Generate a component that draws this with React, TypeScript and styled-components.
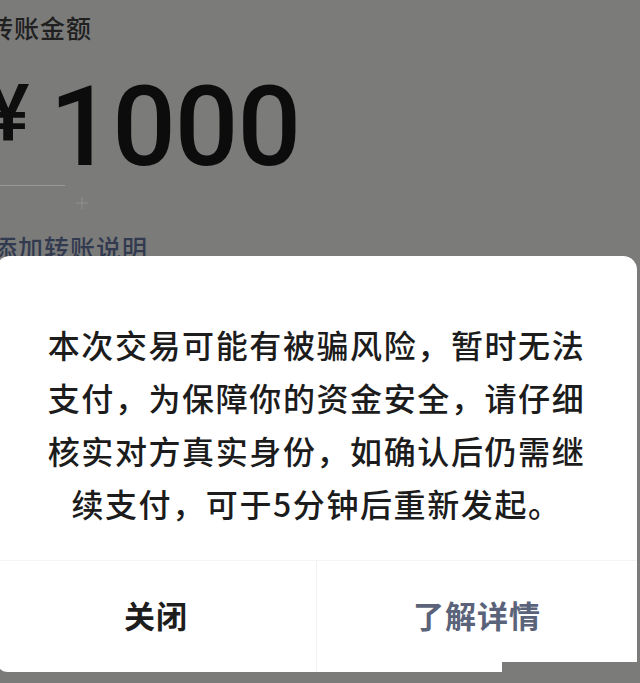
import React from "react";
import styled, { createGlobalStyle } from "styled-components";

const GlobalStyle = createGlobalStyle`
  html, body {
    margin: 0;
    padding: 0;
    background: #7b7c7a;
    overflow: hidden;
  }
  body {
    font-family: "Noto Sans CJK SC", "Noto Sans", sans-serif;
  }
`;

const Page = styled.div`
  width: 640px;
  height: 683px;
  background: #7b7c7a;
  overflow: hidden;
`;

const TransferSection = styled.div`
  display: flex;
  flex-direction: column;
  padding-top: 9px;
`;

const Label = styled.div`
  margin-left: -12px;
  font-size: 25px;
  font-weight: 500;
  line-height: 36px;
  color: #1f201f;
  letter-spacing: 1px;
`;

const AmountRow = styled.div`
  display: flex;
  align-items: flex-start;
  margin-top: 34px;
  margin-left: -13px;
  height: 96px;
`;

const Currency = styled.span`
  font-family: "Roboto", "Noto Sans", sans-serif;
  font-size: 80px;
  font-weight: 500;
  line-height: 70px;
  color: #0e0e0e;
`;

const Amount = styled.span`
  font-family: "Roboto", "Noto Sans", sans-serif;
  font-size: 112px;
  font-weight: 500;
  line-height: 96px;
  color: #0c0c0c;
  margin-left: 20px;
  letter-spacing: -1px;
`;

const InputLine = styled.div`
  display: flex;
  align-items: flex-start;
  margin-top: 10px;
  height: 44px;
`;

const Underline = styled.div`
  width: 65px;
  height: 1px;
  background: #9a9b99;
`;

const Cursor = styled.svg`
  margin-left: 10px;
  margin-top: 11px;
`;

const AddNote = styled.div`
  margin-left: -8px;
  font-size: 25px;
  font-weight: 500;
  line-height: 36px;
  color: #323a4f;
  letter-spacing: 1px;
`;

const Dialog = styled.div`
  position: fixed;
  left: -4px;
  top: 256px;
  width: 641px;
  height: 416px;
  background: #ffffff;
  border-radius: 14px 14px 0 12px;
  display: flex;
  flex-direction: column;

  &::after {
    content: "";
    position: absolute;
    right: 0;
    bottom: 0;
    width: 135px;
    height: 10px;
    background: #7b7c7a;
  }
`;

const Message = styled.p`
  margin: 0;
  padding: 62px 40px 0;
  height: 304px;
  box-sizing: border-box;
  text-align: center;
  font-size: 32px;
  font-weight: 500;
  line-height: 53px;
  letter-spacing: 1.6px;
  color: #1c1c1c;
`;

const Footer = styled.div`
  flex: 1;
  display: flex;
  border-top: 1px solid #f4f4f4;
`;

const Action = styled.button<{ $primary?: boolean; $divider?: boolean }>`
  flex: 1;
  border: none;
  background: transparent;
  font-family: "Noto Sans CJK SC", "Noto Sans", sans-serif;
  font-size: 31px;
  font-weight: 700;
  letter-spacing: 1px;
  color: ${(p) => (p.$primary ? "#5a6379" : "#1d1d1d")};
  border-right: ${(p) => (p.$divider ? "1px solid #f2f2f2" : "none")};
  padding: 0 0 4px;
  cursor: pointer;
`;

export default function App() {
  return (
    <Page>
      <GlobalStyle />
      <TransferSection>
        <Label>转账金额</Label>
        <AmountRow>
          <Currency>¥</Currency>
          <Amount>1000</Amount>
        </AmountRow>
        <InputLine>
          <Underline />
          <Cursor width="14" height="14" viewBox="0 0 14 14">
            <path d="M7 1v12M1 7h12" stroke="#8f908e" strokeWidth="1" />
          </Cursor>
        </InputLine>
        <AddNote>添加转账说明</AddNote>
      </TransferSection>
      <Dialog>
        <Message>
          本次交易可能有被骗风险，暂时无法
          <br />
          支付，为保障你的资金安全，请仔细
          <br />
          核实对方真实身份，如确认后仍需继
          <br />
          续支付，可于5分钟后重新发起。
        </Message>
        <Footer>
          <Action $divider>关闭</Action>
          <Action $primary>了解详情</Action>
        </Footer>
      </Dialog>
    </Page>
  );
}
